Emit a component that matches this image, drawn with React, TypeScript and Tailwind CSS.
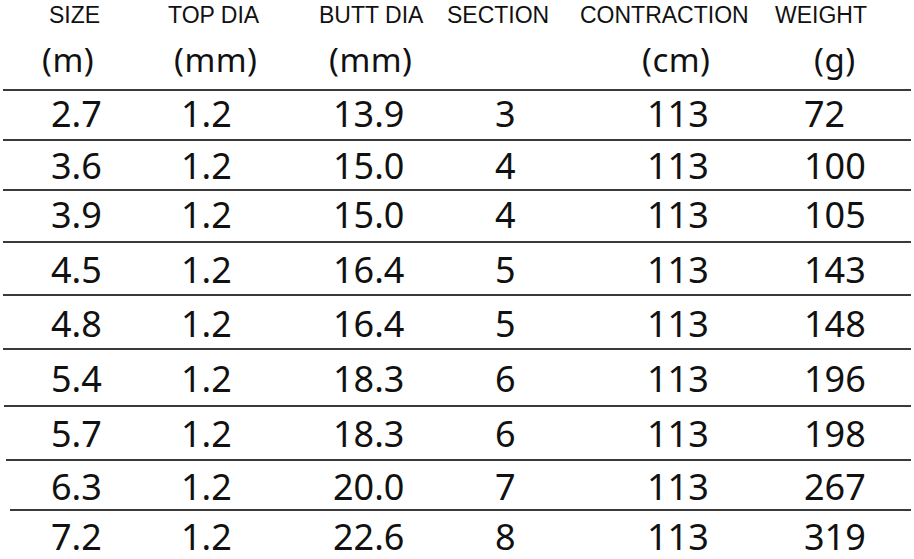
const cols = ['w-[150px]', 'w-[150px]', 'w-[140px]', 'w-[130px]', 'w-[200px]', 'w-[144px]'];

const headPad = ['pl-[49px]', 'pl-[18px]', 'pl-[19px]', 'pl-[7px]', 'pl-[10px]', 'pl-[5px]'];
const unitPad = ['pl-[42px]', 'pl-[24px]', 'pl-[29px]', 'pl-0', 'pl-[72px]', 'pl-[44px]'];
const dataPad = ['pl-[51px]', 'pl-[31px]', 'pl-[33px]', 'pl-[55px]', 'pl-[77px]', 'pl-[34px]'];

const headers = ['SIZE', 'TOP DIA', 'BUTT DIA', 'SECTION', 'CONTRACTION', 'WEIGHT'];
const units = ['(m)', '(mm)', '(mm)', '', '(cm)', '(g)'];

// row height + top padding measured off the picture (lines are not evenly spaced)
const rows = [
  { cells: ['2.7', '1.2', '13.9', '3', '113', '72'], h: 'h-[50px]', pt: 'pt-[5px]', ml: 'ml-[3px]' },
  { cells: ['3.6', '1.2', '15.0', '4', '113', '100'], h: 'h-[50px]', pt: 'pt-[7px]', ml: 'ml-[3px]' },
  { cells: ['3.9', '1.2', '15.0', '4', '113', '105'], h: 'h-[52px]', pt: 'pt-[6px]', ml: 'ml-[3px]' },
  { cells: ['4.5', '1.2', '16.4', '5', '113', '143'], h: 'h-[53px]', pt: 'pt-[9px]', ml: 'ml-[3px]' },
  { cells: ['4.8', '1.2', '16.4', '5', '113', '148'], h: 'h-[54px]', pt: 'pt-[10px]', ml: 'ml-[3px]' },
  { cells: ['5.4', '1.2', '18.3', '6', '113', '196'], h: 'h-[57px]', pt: 'pt-[11px]', ml: 'ml-[3px]' },
  { cells: ['5.7', '1.2', '18.3', '6', '113', '198'], h: 'h-[54px]', pt: 'pt-[9px]', ml: 'ml-[4px]' },
  { cells: ['6.3', '1.2', '20.0', '7', '113', '267'], h: 'h-[50px]', pt: 'pt-[8px]', ml: 'ml-[6px]' },
  { cells: ['7.2', '1.2', '22.6', '8', '113', '319'], h: 'h-[50px]', pt: 'pt-[8px]', ml: 'ml-[10px]' },
];

export default function App() {
  return (
    <div className="w-[914px] h-[559px] overflow-hidden bg-white text-[#111]">
      {/* two-line header */}
      <div className="h-[89px]">
        <div className="flex pt-[4px] h-[43px] font-['Liberation_Sans',Arial,sans-serif] text-[23px] leading-none">
          {headers.map((t, i) => (
            <div key={i} className={`${cols[i]} ${headPad[i]} whitespace-nowrap`}>
              {t}
            </div>
          ))}
        </div>
        <div className="flex font-['Noto_Sans',sans-serif] text-[33px] leading-none tracking-[0.5px]">
          {units.map((t, i) => (
            <div key={i} className={`${cols[i]} ${unitPad[i]} whitespace-nowrap`}>
              {t}
            </div>
          ))}
        </div>
      </div>

      {rows.map((r, ri) => (
        <div key={ri} className={r.h}>
          <div className={`h-[2px] ${r.ml} mr-[3px] bg-[#3a3a3a]`} />
          <div className={`flex ${r.pt} font-['Noto_Sans',sans-serif] text-[36px] leading-none`}>
            {r.cells.map((c, ci) => (
              <div key={ci} className={`${cols[ci]} ${dataPad[ci]} whitespace-nowrap`}>
                {c}
              </div>
            ))}
          </div>
        </div>
      ))}
    </div>
  );
}
